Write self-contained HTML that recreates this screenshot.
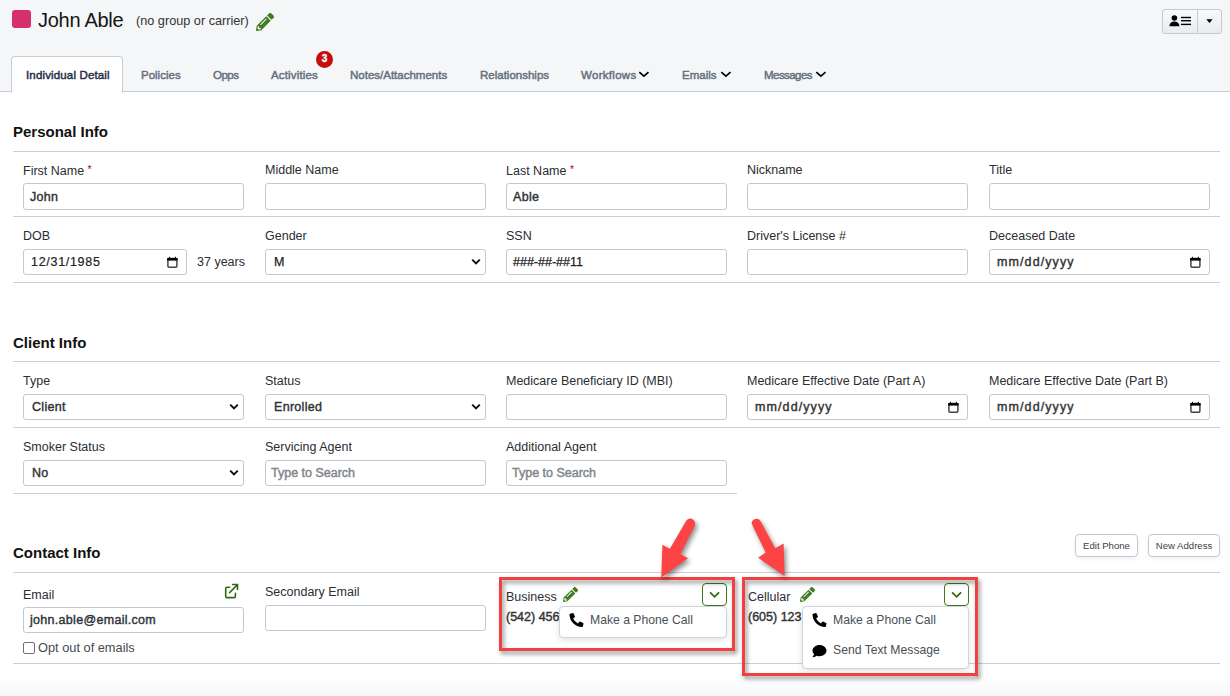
<!DOCTYPE html>
<html><head><meta charset="utf-8">
<style>
*{box-sizing:border-box}
html,body{margin:0;padding:0}
body{width:1230px;height:696px;position:relative;overflow:hidden;background:#fff;font-family:"Liberation Sans",sans-serif;color:#222}
.a{position:absolute}
.t{position:absolute;white-space:nowrap;line-height:1}
.hdr{left:0;top:0;width:1230px;height:92px;background:#f4f6f8;border-bottom:1px solid #c8ced5}
.tab{font-size:11.5px;color:#656f7b;-webkit-text-stroke:.45px #656f7b;top:70px}
.h{font-size:15px;font-weight:700;color:#111}
.hr{position:absolute;height:1px;background:#c9d0d7}
.lb{font-size:12.5px;color:#2a2d33}
.req{color:#8b1a1a;font-size:10.5px;vertical-align:2px}
.in{position:absolute;width:221px;height:26px;border:1px solid #c3c9d0;border-radius:3px;background:#fff}
.iv{font-size:12.5px;color:#2f3236;-webkit-text-stroke:.4px #2f3236;letter-spacing:.3px}
.ph{font-size:12.5px;color:#80868c;-webkit-text-stroke:.45px #80868c}
.sv{font-size:12.5px;color:#222;-webkit-text-stroke:.25px #222}
.dm{font-size:12.5px;color:#333;-webkit-text-stroke:.4px #333;letter-spacing:1.1px}
.dt{font-size:12.5px;color:#222;-webkit-text-stroke:.2px #222;letter-spacing:.7px}
.btn{border:1px solid #c3c9d1;border-radius:4px;background:#fff;font-size:9.6px;color:#3a3f45;text-align:center;line-height:21px;box-shadow:0 2px 4px rgba(0,0,0,.06)}
.gbtn{width:25px;height:23px;border:1px solid #3f7a1c;border-radius:4px;background:#fff}
.pn{font-size:12.5px;color:#333;-webkit-text-stroke:.4px #333}
.dd{border:1px solid #cfd4da;border-radius:4px;background:#fff;box-shadow:0 2px 6px rgba(0,0,0,.12)}
.mi{font-size:12.2px;color:#4a4f55}
.rb{border:3px solid #f0403f;filter:drop-shadow(2px 3px 2px rgba(0,0,0,.45))}
</style></head><body>

<!-- header -->
<div class="a hdr"></div>
<div class="a" style="left:12px;top:10px;width:19px;height:18px;background:#d4306e;border-radius:3px"></div>
<div class="t" style="left:38px;top:10px;font-size:20px;letter-spacing:-0.28px;color:#151515">John Able</div>
<div class="t" style="left:136px;top:15px;font-size:12.7px;color:#333">(no group or carrier)</div>

<!-- tabs -->
<div class="a" style="left:11px;top:56px;width:112px;height:37px;background:#fff;border:1px solid #c8ced5;border-bottom:none;border-radius:4px 4px 0 0"></div>
<div class="t tab" style="left:26px;color:#1f2b45;-webkit-text-stroke:.45px #1f2b45;letter-spacing:.15px">Individual Detail</div>
<div class="t tab" style="left:141px">Policies</div>
<div class="t tab" style="left:213px;letter-spacing:-.5px">Opps</div>
<div class="t tab" style="left:271px;letter-spacing:.15px">Activities</div>
<div class="a" style="left:316px;top:50.5px;width:17px;height:17px;border-radius:50%;background:#c40d0d;color:#fff;font-size:10px;font-weight:700;text-align:center;line-height:16px;-webkit-text-stroke:.3px #fff">3</div>
<div class="t tab" style="left:350px">Notes/Attachments</div>
<div class="t tab" style="left:480px">Relationships</div>
<div class="t tab" style="left:581px;letter-spacing:.3px">Workflows</div>
<div class="t tab" style="left:682px">Emails</div>
<div class="t tab" style="left:764px;letter-spacing:-.55px">Messages</div>

<!-- section: personal -->
<div class="t h" style="left:13px;top:124px">Personal Info</div>
<div class="hr" style="left:13px;top:151px;width:1207px"></div>
<div class="hr" style="left:13px;top:216px;width:1207px"></div>
<div class="hr" style="left:13px;top:282px;width:1207px"></div>

<div class="t h" style="left:13px;top:335px">Client Info</div>
<div class="hr" style="left:13px;top:361px;width:1207px"></div>
<div class="hr" style="left:13px;top:427px;width:1207px"></div>
<div class="hr" style="left:13px;top:493px;width:724px"></div>

<div class="t h" style="left:13px;top:545px">Contact Info</div>
<div class="hr" style="left:13px;top:572px;width:1207px"></div>
<div class="hr" style="left:13px;top:663px;width:1207px"></div>

<!-- rows -->
<div class="t lb" style="left:23px;top:164px">First Name <span class="req">*</span></div>
<div class="in" style="left:23px;top:183px;width:221px;height:27px"></div>
<div class="t iv" style="left:30px;top:191px">John</div>
<div class="t lb" style="left:265px;top:164px">Middle Name</div>
<div class="in" style="left:265px;top:183px;width:221px;height:27px"></div>
<div class="t lb" style="left:506px;top:164px">Last Name <span class="req">*</span></div>
<div class="in" style="left:506px;top:183px;width:221px;height:27px"></div>
<div class="t iv" style="left:513px;top:191px">Able</div>
<div class="t lb" style="left:747px;top:164px">Nickname</div>
<div class="in" style="left:747px;top:183px;width:221px;height:27px"></div>
<div class="t lb" style="left:989px;top:164px">Title</div>
<div class="in" style="left:989px;top:183px;width:221px;height:27px"></div>
<div class="t lb" style="left:23px;top:230px">DOB</div>
<div class="in" style="left:23px;top:249px;width:164px"></div>
<div class="t dt" style="left:31px;top:256px">12/31/1985</div>
<svg class="a" style="left:166px;top:255px" width="12" height="13" viewBox="0 0 12 13"><rect x="1.9" y="3.6" width="9" height="8.6" rx="1.1" fill="none" stroke="#444" stroke-width="1.5"/><rect x="1.2" y="3" width="10.4" height="2.6" fill="#000"/><path d="M2.6 3.2 L3.4 1.2 L4.2 3.2 Z M8.6 3.2 L9.4 1.2 L10.2 3.2 Z" fill="#000"/></svg>
<div class="t lb" style="left:197px;top:256px">37 years</div>
<div class="t lb" style="left:265px;top:230px">Gender</div>
<div class="in" style="left:265px;top:249px;width:221px"></div>
<div class="t sv" style="left:274px;top:256px">M</div>
<svg class="a" style="left:471px;top:258px" width="10" height="8" viewBox="0 0 10 8"><path d="M1.2 1.6 L5 5.4 L8.8 1.6" fill="none" stroke="#111" stroke-width="2"/></svg>
<div class="t lb" style="left:506px;top:230px">SSN</div>
<div class="in" style="left:506px;top:249px;width:221px"></div>
<div class="t sv" style="left:513px;top:256px">###-##-##11</div>
<div class="t lb" style="left:747px;top:230px">Driver's License #</div>
<div class="in" style="left:747px;top:249px;width:221px"></div>
<div class="t lb" style="left:989px;top:230px">Deceased Date</div>
<div class="in" style="left:989px;top:249px;width:221px"></div>
<div class="t dm" style="left:997px;top:256px">mm/dd/yyyy</div>
<svg class="a" style="left:1189px;top:255px" width="12" height="13" viewBox="0 0 12 13"><rect x="1.9" y="3.6" width="9" height="8.6" rx="1.1" fill="none" stroke="#444" stroke-width="1.5"/><rect x="1.2" y="3" width="10.4" height="2.6" fill="#000"/><path d="M2.6 3.2 L3.4 1.2 L4.2 3.2 Z M8.6 3.2 L9.4 1.2 L10.2 3.2 Z" fill="#000"/></svg>
<div class="t lb" style="left:23px;top:375px">Type</div>
<div class="in" style="left:23px;top:394px;width:221px"></div>
<div class="t iv" style="left:32px;top:401px">Client</div>
<svg class="a" style="left:229px;top:403px" width="10" height="8" viewBox="0 0 10 8"><path d="M1.2 1.6 L5 5.4 L8.8 1.6" fill="none" stroke="#111" stroke-width="2"/></svg>
<div class="t lb" style="left:265px;top:375px">Status</div>
<div class="in" style="left:265px;top:394px;width:221px"></div>
<div class="t iv" style="left:274px;top:401px">Enrolled</div>
<svg class="a" style="left:471px;top:403px" width="10" height="8" viewBox="0 0 10 8"><path d="M1.2 1.6 L5 5.4 L8.8 1.6" fill="none" stroke="#111" stroke-width="2"/></svg>
<div class="t lb" style="left:506px;top:375px">Medicare Beneficiary ID (MBI)</div>
<div class="in" style="left:506px;top:394px;width:221px"></div>
<div class="t lb" style="left:747px;top:375px">Medicare Effective Date (Part A)</div>
<div class="in" style="left:747px;top:394px;width:221px"></div>
<div class="t dm" style="left:755px;top:401px">mm/dd/yyyy</div>
<svg class="a" style="left:947px;top:400px" width="12" height="13" viewBox="0 0 12 13"><rect x="1.9" y="3.6" width="9" height="8.6" rx="1.1" fill="none" stroke="#444" stroke-width="1.5"/><rect x="1.2" y="3" width="10.4" height="2.6" fill="#000"/><path d="M2.6 3.2 L3.4 1.2 L4.2 3.2 Z M8.6 3.2 L9.4 1.2 L10.2 3.2 Z" fill="#000"/></svg>
<div class="t lb" style="left:989px;top:375px">Medicare Effective Date (Part B)</div>
<div class="in" style="left:989px;top:394px;width:221px"></div>
<div class="t dm" style="left:997px;top:401px">mm/dd/yyyy</div>
<svg class="a" style="left:1189px;top:400px" width="12" height="13" viewBox="0 0 12 13"><rect x="1.9" y="3.6" width="9" height="8.6" rx="1.1" fill="none" stroke="#444" stroke-width="1.5"/><rect x="1.2" y="3" width="10.4" height="2.6" fill="#000"/><path d="M2.6 3.2 L3.4 1.2 L4.2 3.2 Z M8.6 3.2 L9.4 1.2 L10.2 3.2 Z" fill="#000"/></svg>
<div class="t lb" style="left:23px;top:441px">Smoker Status</div>
<div class="in" style="left:23px;top:460px;width:221px"></div>
<div class="t iv" style="left:32px;top:467px">No</div>
<svg class="a" style="left:229px;top:469px" width="10" height="8" viewBox="0 0 10 8"><path d="M1.2 1.6 L5 5.4 L8.8 1.6" fill="none" stroke="#111" stroke-width="2"/></svg>
<div class="t lb" style="left:265px;top:441px">Servicing Agent</div>
<div class="in" style="left:265px;top:460px;width:221px"></div>
<div class="t ph" style="left:271px;top:467px">Type to Search</div>
<div class="t lb" style="left:506px;top:441px">Additional Agent</div>
<div class="in" style="left:506px;top:460px;width:221px"></div>
<div class="t ph" style="left:512px;top:467px">Type to Search</div>
<div class="t lb" style="left:23px;top:589px">Email</div>
<div class="in" style="left:23px;top:607px;width:221px"></div>
<div class="t iv" style="left:30px;top:614px">john.able@email.com</div>
<div class="t lb" style="left:265px;top:586px">Secondary Email</div>
<div class="in" style="left:265px;top:605px;width:221px"></div>

<!-- header icons -->
<svg class="a" style="left:256px;top:12.5px" width="18" height="18" viewBox="0 0 512 512"><path fill="#437a22" d="M497.9 142.1l-46.1 46.1c-4.7 4.7-12.3 4.7-17 0l-111-111c-4.7-4.7-4.7-12.3 0-17l46.1-46.1c18.7-18.7 49.1-18.7 67.9 0l60.1 60.1c18.8 18.7 18.8 49.1 0 67.9zM284.2 99.8L21.6 362.4.4 483.9c-2.900 16.4 11.4 30.6 27.8 27.8l121.5-21.3 262.6-262.6c4.7-4.7 4.7-12.3 0-17l-111-111c-4.8-4.7-12.4-4.7-17.1 0zM124.1 339.9c-5.5-5.5-5.5-14.3 0-19.8l154-154c5.5-5.5 14.3-5.5 19.8 0s5.5 14.3 0 19.8l-154 154c-5.5 5.5-14.3 5.5-19.8 0zM88 424h48v36.3l-64.5 11.3-31.1-31.1L51.7 376H88v48z"/></svg>
<div class="a" style="left:1162px;top:9px;width:60px;height:25px;border:1px solid #c5cbd2;border-radius:3px;background:linear-gradient(#f8f9fa,#e9ecef)"></div>
<div class="a" style="left:1197px;top:10px;width:1px;height:23px;background:#c5cbd2"></div>
<svg class="a" style="left:1168px;top:14px" width="25" height="14" viewBox="0 0 25 14"><circle cx="6.4" cy="4" r="2.8" fill="#000"/><path d="M1.4 12.3 C1.4 9.3 3.4 7.6 6.4 7.6 C9.4 7.6 11.4 9.3 11.4 12.3 Z" fill="#000"/><rect x="13" y="2.8" width="10" height="1.4" fill="#000"/><rect x="13" y="6" width="10" height="1.4" fill="#000"/><rect x="13" y="9.7" width="10" height="1.4" fill="#000"/></svg>
<svg class="a" style="left:1206px;top:19px" width="7" height="5" viewBox="0 0 7 5"><path d="M0.3 0.3 H6.6 L3.45 3.9 Z" fill="#000"/></svg>

<!-- tab chevrons -->
<svg class="a" style="left:638px;top:70px" width="12" height="9" viewBox="0 0 12 9"><path d="M1.3 2.2 L5.9 6.2 L10.5 2.2" fill="none" stroke="#000" stroke-width="1.7"/></svg>
<svg class="a" style="left:720px;top:70px" width="12" height="9" viewBox="0 0 12 9"><path d="M1.3 2.2 L5.9 6.2 L10.5 2.2" fill="none" stroke="#000" stroke-width="1.7"/></svg>
<svg class="a" style="left:815px;top:70px" width="12" height="9" viewBox="0 0 12 9"><path d="M1.3 2.2 L5.9 6.2 L10.5 2.2" fill="none" stroke="#000" stroke-width="1.7"/></svg>

<!-- contact extras -->
<svg class="a" style="left:220px;top:580px" width="22" height="22" viewBox="0 0 22 22"><path d="M9.6 7.2 H6.9 Q5.7 7.2 5.7 8.4 V16.4 Q5.7 17.6 6.9 17.6 H14.2 Q15.4 17.6 15.4 16.4 V13.4" fill="none" stroke="#2f6b12" stroke-width="1.6" stroke-linecap="round"/><path d="M9.6 12.6 L17.3 4.7 M12.6 4.5 H17.5 V9.4" fill="none" stroke="#2f6b12" stroke-width="1.6" stroke-linecap="round"/></svg>
<div class="a" style="left:23px;top:642px;width:12px;height:12px;border:1px solid #6b7177;border-radius:2px;background:#fff"></div>
<div class="t lb" style="left:38px;top:642px;font-size:12.8px;color:#454a50">Opt out of emails</div>

<div class="a btn" style="left:1075px;top:534px;width:63px;height:23px">Edit Phone</div>
<div class="a btn" style="left:1148px;top:534px;width:72px;height:23px">New Address</div>

<!-- phone cards -->
<div class="t lb" style="left:506px;top:591px">Business</div>
<svg class="a" style="left:563px;top:587px" width="15" height="15" viewBox="0 0 512 512"><use href="#pen"/></svg>
<div class="a gbtn" style="left:702px;top:583px"></div>
<svg class="a" style="left:708px;top:588px" width="14" height="12" viewBox="0 0 14 12"><path d="M2.1 4.3 L6.6 8.8 L11.1 4.3" fill="none" stroke="#2f6b12" stroke-width="1.8"/></svg>
<div class="t pn" style="left:506px;top:611px">(542) 456</div>
<div class="a dd" style="left:559px;top:606px;width:168px;height:32px"></div>
<svg class="a" style="left:569px;top:613px" width="15" height="14" viewBox="0 0 512 512"><use href="#phone"/></svg>
<div class="t mi" style="left:590px;top:614px">Make a Phone Call</div>

<div class="t lb" style="left:748px;top:591px">Cellular</div>
<svg class="a" style="left:800px;top:587px" width="15" height="15" viewBox="0 0 512 512"><use href="#pen"/></svg>
<div class="a gbtn" style="left:944px;top:583px"></div>
<svg class="a" style="left:950px;top:588px" width="14" height="12" viewBox="0 0 14 12"><path d="M2.1 4.3 L6.6 8.8 L11.1 4.3" fill="none" stroke="#2f6b12" stroke-width="1.8"/></svg>
<div class="t pn" style="left:748px;top:611px">(605) 123</div>
<div class="a dd" style="left:802px;top:606px;width:167px;height:63px"></div>
<svg class="a" style="left:812px;top:613px" width="15" height="14" viewBox="0 0 512 512"><use href="#phone"/></svg>
<div class="t mi" style="left:833px;top:614px">Make a Phone Call</div>
<svg class="a" style="left:812px;top:644px" width="15" height="14" viewBox="0 0 512 512"><use href="#chat"/></svg>
<div class="t mi" style="left:833px;top:644px">Send Text Message</div>

<!-- red boxes -->
<div class="a rb" style="left:499px;top:577px;width:236px;height:74px"></div>
<div class="a rb" style="left:742px;top:577px;width:236px;height:99px"></div>

<!-- arrows -->
<svg class="a" style="left:0;top:0;filter:drop-shadow(2px 3px 2.5px rgba(0,0,0,.45))" width="1230" height="696" viewBox="0 0 1230 696"><path fill="#fd4343" d="M685.9 521.2 A4.9 4.9 0 0 1 694.6 525.9 L680.4 554 L688 558.2 L661.3 577.6 L662.4 544.7 L669.9 548.7 Z"/><path fill="#fd4343" d="M760.5 520.9 A4.9 4.9 0 0 0 751.6 523.6 L765.7 552.4 L758.1 557.7 L784.6 576 L783.6 543.5 L775.2 548.2 Z"/></svg>

<div class="a" style="left:0;top:677px;width:1230px;height:19px;background:linear-gradient(rgba(238,240,243,0),rgba(238,240,243,.55))"></div>

<svg width="0" height="0" style="position:absolute"><defs>
<path id="pen" fill="#437a22" d="M497.9 142.1l-46.1 46.1c-4.7 4.7-12.3 4.7-17 0l-111-111c-4.7-4.7-4.7-12.3 0-17l46.1-46.1c18.7-18.7 49.1-18.7 67.9 0l60.1 60.1c18.8 18.7 18.8 49.1 0 67.9zM284.2 99.8L21.6 362.4.4 483.9c-2.900 16.4 11.4 30.6 27.8 27.8l121.5-21.3 262.6-262.6c4.7-4.7 4.7-12.3 0-17l-111-111c-4.8-4.700-12.4-4.7-17.1 0zM124.1 339.9c-5.5-5.5-5.5-14.3 0-19.8l154-154c5.5-5.5 14.3-5.5 19.800 0s5.5 14.3 0 19.8l-154 154c-5.5 5.5-14.3 5.5-19.8 0zM88 424h48v36.3l-64.5 11.3-31.1-31.1L51.7 376H88v48z"/>
<path id="phone" fill="#000" d="M497.39 361.8l-112-48a24 24 0 0 0-28 6.9l-49.6 60.6A370.66 370.66 0 0 1 130.6 204.11l60.6-49.6a23.94 23.94 0 0 0 6.9-28l-48-112A24.16 24.16 0 0 0 122.6.61l-104 24A24 24 0 0 0 0 48c0 256.5 207.9 464 464 464a24 24 0 0 0 23.4-18.6l24-104a24.29 24.29 0 0 0-14.010-27.6z"/>
<path id="chat" fill="#000" d="M256 32C114.6 32 0 125.1 0 240c0 49.6 21.4 95 57 130.7C44.5 421.1 2.7 466 2.2 466.5c-2.2 2.3-2.8 5.7-1.5 8.7S4.8 480 8 480c66.3 0 116-31.8 140.6-51.4 32.7 12.3 69 19.4 107.4 19.4 141.4 0 256-93.1 256-208S397.4 32 256 32z"/>
</defs></svg>

</body></html>
